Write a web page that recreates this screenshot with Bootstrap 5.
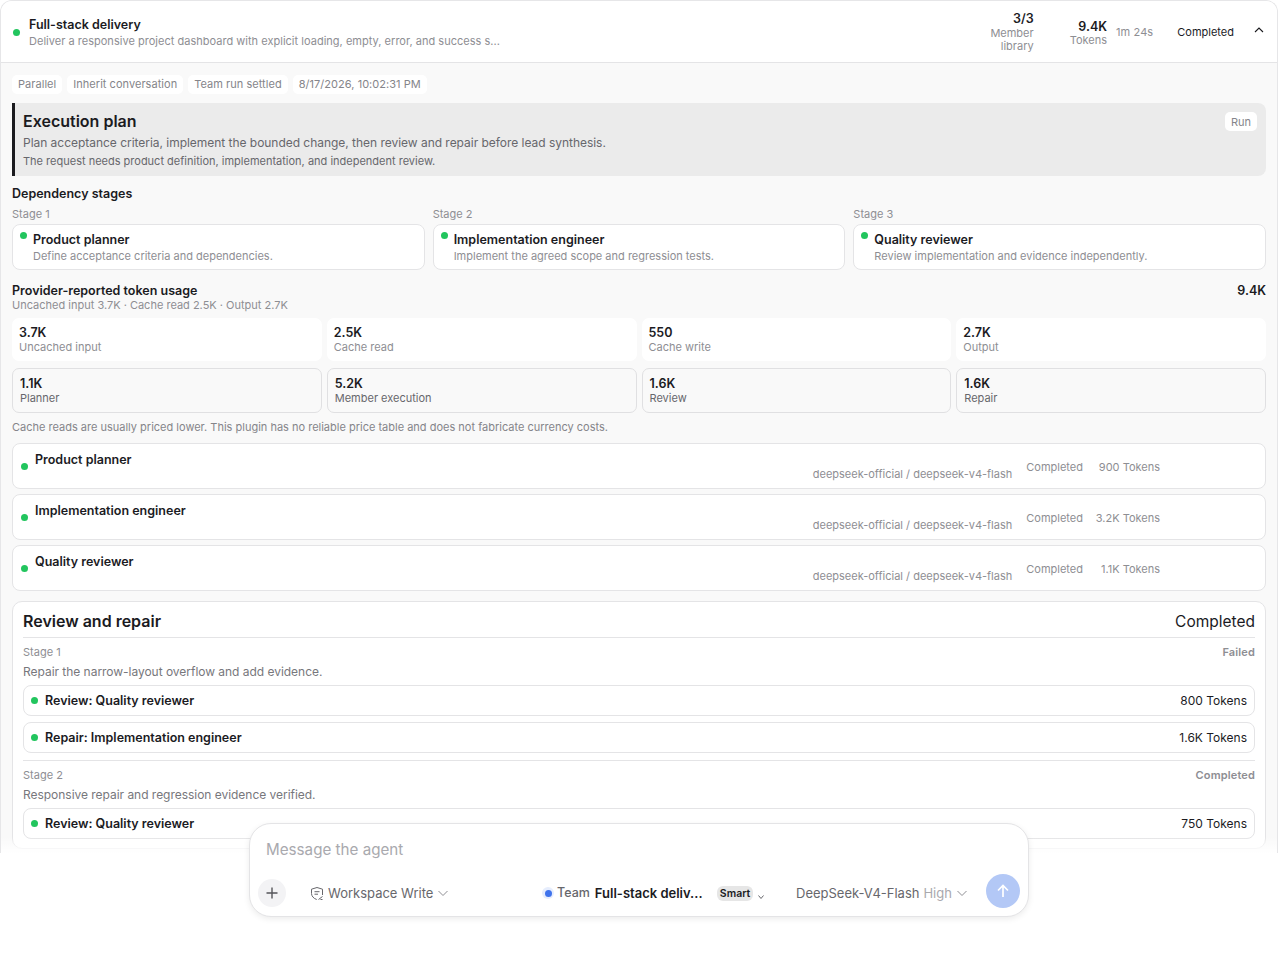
<!DOCTYPE html>
<html lang="en">
<head>
<meta charset="UTF-8">
<meta name="viewport" content="width=device-width, initial-scale=1.0">
<title>Full-stack delivery</title>
<link href="https://cdn.jsdelivr.net/npm/bootstrap@5.3.2/dist/css/bootstrap.min.css" rel="stylesheet">
<style>
body { background: #fff; font-family: Inter, "Liberation Sans", sans-serif; color: #1b1b1f; font-size: 11px; line-height: 14px; height: 960px; overflow: hidden; }
.panel { height: 853px; overflow: hidden; border: 1px solid #e6e6e8; border-bottom: 0; border-radius: 12px 12px 0 0; background: #f9f9f9; position: relative; }
.fade-bottom { position: absolute; left: 0; right: 0; bottom: 0; height: 16px; background: linear-gradient(rgba(255,255,255,0), #fff); pointer-events: none; }
.top { height: 62px; background: #fff; border-bottom: 1px solid #e4e4e6; padding: 2px 12px 0; }
.dot { width: 7px; height: 7px; border-radius: 50%; background: #22c55e; flex: none; }
.title { font-size: 12.5px; font-weight: 600; line-height: 15px; }
.muted { color: #8e8e93; }
.top .desc { font-size: 11px; line-height: 16px; margin-top: 1px; letter-spacing: .02px; }
.top .dot { margin-right: 9px; }
.stat { text-align: right; line-height: 13px; font-size: 11px; }
.stat b { display: block; color: #1b1b1f; font-weight: 600; font-size: 12.5px; line-height: 15px; }
.stat.members { width: 44px; margin-bottom: 2px; }
.stat.members b { line-height: 16px; }
.stat.tokens { margin-left: 36px; }
.elapsed { font-size: 11px; margin: 0 0 2px 9px; letter-spacing: .1px; }
.state { font-size: 11px; margin: 0 0 2px 24px; }
.chevron { margin-left: 19px; margin-bottom: 6px; }
.chip { background: #fff; border-radius: 5px; padding: 0 6px; height: 19px; line-height: 19px; font-size: 11px; color: #85858a; letter-spacing: .04px; }
.chips { gap: 5px; }
.body { padding: 12px 11px 0; }
.plan { background: #ebebeb; border-left: 3px solid #1b1b1f; border-radius: 0 8px 8px 0; height: 73px; margin-top: 9px; padding: 8px 12px 0 8px; position: relative; }
.plan h2 { font-size: 16px; line-height: 20px; font-weight: 600; margin: 0 0 4px; }
.plan p { margin: 0; font-size: 12px; line-height: 15px; color: #67676c; letter-spacing: -.03px; }
.plan small { display: block; font-size: 11px; line-height: 14px; color: #67676c; margin-top: 4px; }
.run { position: absolute; top: 9px; right: 9px; background: #fff; border-radius: 5px; padding: 1px 6px 0; height: 19px; line-height: 19px; font-size: 11px; color: #85858a; }
.head { font-size: 12.5px; font-weight: 600; line-height: 15px; }
.dep-head { margin-top: 10px; }
.stage-label { font-size: 11px; line-height: 14px; color: #8e8e93; margin-bottom: 3px; }
.stage-grid { display: grid; grid-template-columns: repeat(3, 1fr); gap: 8px; margin-top: 6px; }
.box { background: #fff; border: 1px solid #e4e4e6; border-radius: 8px; }
.stage-card { height: 46px; padding: 7px 7px 0; display: flex; gap: 6px; }
.stage-card .title { line-height: 15px; }
.stage-card .desc { font-size: 11px; line-height: 14px; color: #8e8e93; margin-top: 2px; }
.usage-head { margin-top: 13px; }
.usage-sub { margin: 0 0 6px; }
.token-grid { display: grid; grid-template-columns: repeat(4, 1fr); gap: 5px; }
.metric { height: 43px; background: #fff; border-radius: 7px; padding: 7px 7px 0; margin-bottom: 7px; }
.metric.line { height: 45px; background: transparent; border: 1px solid #e0e0e2; margin-bottom: 0; }
.metric b { display: block; font-size: 12.5px; line-height: 15px; font-weight: 600; }
.metric span { display: block; font-size: 11px; line-height: 15px; color: #8e8e93; }
.metric.line span { color: #67676c; }
.note { font-size: 11px; line-height: 14px; color: #85858a; margin: 7px 0 9px; }
.member { height: 46px; margin-bottom: 5px; padding: 0 8px; display: flex; position: relative; }
.member .dot { margin-top: 19px; }
.member .title { margin: 8px 0 0 7px; flex: 1; }
.member .model { font-size: 11px; color: #8e8e93; margin-top: 23px; }
.member .status { font-size: 11px; color: #8e8e93; margin: 16px 0 0 14px; }
.member .tok { font-size: 11px; color: #8e8e93; margin-top: 16px; width: 77px; text-align: right; margin-right: 97px; }
.repair { margin-top: 10px; padding: 1px 10px 0; border-radius: 10px; height: 248px; }
.repair-top { height: 35px; border-bottom: 1px solid #e4e4e6; padding-top: 2px; }
.repair-top h2 { font-size: 16px; font-weight: 600; margin: 0; line-height: 20px; }
.repair-top span { font-size: 15.5px; line-height: 20px; margin-top: 1px; }
.st-row { font-size: 11px; line-height: 14px; color: #8e8e93; margin-top: 7px; }
.st-row b { font-weight: 600; letter-spacing: .15px; }
.st-text { font-size: 12px; line-height: 15px; color: #77777c; margin-top: 5px; letter-spacing: -.03px; }
.rev { height: 31px; border-radius: 8px; padding: 0 7px; margin-top: 6px; font-size: 12px; }
.rev .dot { margin-right: 7px; }
.rev b { font-weight: 600; font-size: 12.5px; }
.sep { border-top: 1px solid #e4e4e6; margin-top: 7px; padding-top: 7px; }
.composer { position: absolute; left: 249px; top: 823px; width: 780px; height: 94px; background: #fff; border: 1px solid #e4e4e6; border-radius: 22px; box-shadow: 0 2px 6px rgba(0,0,0,.08); padding: 0 8px; }
.prompt { font-size: 15.2px; line-height: 20px; color: #a9a9ae; padding: 16px 0 0 8px; height: 44px; }
.plus { width: 28px; height: 28px; border-radius: 50%; background: #f3f3f5; margin-top: 11px; }
.send { width: 34px; height: 34px; border-radius: 50%; background: #b3c8f6; margin-top: 6px; }
.tool { font-size: 13px; line-height: 16px; color: #67676c; margin-top: 11px; height: 28px; }
.mode { margin-left: 24px; width: 233px; }
.team { width: 253px; }
.tdot { width: 12px; height: 12px; border-radius: 50%; background: #e6edfd; margin: 0 3px 0 -1px; }
.tdot i { display: block; width: 7px; height: 7px; border-radius: 50%; background: #3f73ec; }
.team-label { font-size: 12.5px; font-weight: 500; }
.team-name { color: #1b1b1f; font-weight: 600; width: 122px; margin-left: 5px; }
.smart { background: #e6e6e6; border-radius: 6px; font-size: 10.5px; font-weight: 600; padding: 0 3px; line-height: 15px; color: #1b1b1f; }
.light { color: #a9a9ae; }
</style>
</head>
<body>
<div class="panel">
    <div class="top d-flex align-items-center">
        <span class="dot"></span>
        <div class="flex-grow-1">
            <div class="title">Full-stack delivery</div>
            <div class="desc muted">Deliver a responsive project dashboard with explicit loading, empty, error, and success s...</div>
        </div>
        <div class="stat muted members"><b>3/3</b>Member library</div>
        <div class="stat muted tokens"><b>9.4K</b>Tokens</div>
        <div class="muted elapsed">1m 24s</div>
        <div class="state">Completed</div>
        <svg class="chevron" width="12" height="12" viewBox="0 0 12 12" fill="none" stroke="#1b1b1f" stroke-width="1.1"><path d="M2 8l4-4 4 4"/></svg>
    </div>
    <div class="body">
        <div class="d-flex chips">
            <span class="chip">Parallel</span>
            <span class="chip">Inherit conversation</span>
            <span class="chip">Team run settled</span>
            <span class="chip">8/17/2026, 10:02:31 PM</span>
        </div>
        <div class="plan">
            <h2>Execution plan</h2>
            <p>Plan acceptance criteria, implement the bounded change, then review and repair before lead synthesis.</p>
            <small>The request needs product definition, implementation, and independent review.</small>
            <span class="run">Run</span>
        </div>
        <div class="head dep-head">Dependency stages</div>
        <div class="stage-grid">
            <div><div class="stage-label">Stage 1</div><div class="box stage-card"><span class="dot"></span><div><div class="title">Product planner</div><div class="desc">Define acceptance criteria and dependencies.</div></div></div></div>
            <div><div class="stage-label">Stage 2</div><div class="box stage-card"><span class="dot"></span><div><div class="title">Implementation engineer</div><div class="desc">Implement the agreed scope and regression tests.</div></div></div></div>
            <div><div class="stage-label">Stage 3</div><div class="box stage-card"><span class="dot"></span><div><div class="title">Quality reviewer</div><div class="desc">Review implementation and evidence independently.</div></div></div></div>
        </div>
        <div class="d-flex justify-content-between usage-head">
            <div class="head">Provider-reported token usage</div>
            <div class="head">9.4K</div>
        </div>
        <div class="stage-label usage-sub">Uncached input 3.7K · Cache read 2.5K · Output 2.7K</div>
        <div class="token-grid">
            <div class="metric"><b>3.7K</b><span>Uncached input</span></div>
            <div class="metric"><b>2.5K</b><span>Cache read</span></div>
            <div class="metric"><b>550</b><span>Cache write</span></div>
            <div class="metric"><b>2.7K</b><span>Output</span></div>
        </div>
        <div class="token-grid">
            <div class="metric line"><b>1.1K</b><span>Planner</span></div>
            <div class="metric line"><b>5.2K</b><span>Member execution</span></div>
            <div class="metric line"><b>1.6K</b><span>Review</span></div>
            <div class="metric line"><b>1.6K</b><span>Repair</span></div>
        </div>
        <div class="note">Cache reads are usually priced lower. This plugin has no reliable price table and does not fabricate currency costs.</div>
        <div class="box member"><span class="dot"></span><div class="title">Product planner</div><div class="model">deepseek-official / deepseek-v4-flash</div><div class="status">Completed</div><div class="tok">900 Tokens</div></div>
        <div class="box member"><span class="dot"></span><div class="title">Implementation engineer</div><div class="model">deepseek-official / deepseek-v4-flash</div><div class="status">Completed</div><div class="tok">3.2K Tokens</div></div>
        <div class="box member"><span class="dot"></span><div class="title">Quality reviewer</div><div class="model">deepseek-official / deepseek-v4-flash</div><div class="status">Completed</div><div class="tok">1.1K Tokens</div></div>
        <div class="box repair">
            <div class="repair-top d-flex justify-content-between align-items-center"><h2>Review and repair</h2><span>Completed</span></div>
            <div class="st-row d-flex justify-content-between"><span>Stage 1</span><b>Failed</b></div>
            <div class="st-text">Repair the narrow-layout overflow and add evidence.</div>
            <div class="box rev d-flex align-items-center"><span class="dot"></span><b class="flex-grow-1">Review: Quality reviewer</b><span>800 Tokens</span></div>
            <div class="box rev d-flex align-items-center"><span class="dot"></span><b class="flex-grow-1">Repair: Implementation engineer</b><span>1.6K Tokens</span></div>
            <div class="sep st-row d-flex justify-content-between"><span>Stage 2</span><b>Completed</b></div>
            <div class="st-text">Responsive repair and regression evidence verified.</div>
            <div class="box rev d-flex align-items-center"><span class="dot"></span><b class="flex-grow-1">Review: Quality reviewer</b><span>750 Tokens</span></div>
        </div>
    </div>
    <div class="fade-bottom"></div>
</div>
<div class="composer">
    <div class="prompt">Message the agent</div>
    <div class="d-flex">
        <div class="plus d-flex align-items-center justify-content-center">
            <svg width="14" height="14" viewBox="0 0 14 14" stroke="#55555a" stroke-width="1.4"><path d="M7 1.5v11M1.5 7h11"/></svg>
        </div>
        <div class="tool mode d-flex align-items-center">
            <svg class="me-1" width="14" height="15" viewBox="0 0 14 15" fill="none" stroke="#67676c" stroke-width="1"><path d="M12.5 9V3.2L7 1.5 1.5 3.2v4.3c0 2.7 2.2 5 5.2 6M4.500 5.700h5M4.500 8.200h3.500M8.500 13.500l4-3M10.500 13.500h2"/></svg>
            Workspace Write
            <svg class="ms-1" width="12" height="12" viewBox="0 0 12 12" fill="none" stroke="#8e8e93"><path d="M1.500 4l4.500 4.500L10.500 4"/></svg>
        </div>
        <div class="tool team d-flex align-items-center">
            <span class="tdot d-flex align-items-center justify-content-center"><i></i></span>
            <span class="team-label">Team</span>
            <b class="team-name">Full-stack deliv...</b>
            <span class="smart">Smart</span>
            <svg class="ms-1 mt-2" width="8" height="8" viewBox="0 0 8 8" fill="none" stroke="#67676c"><path d="M1.500 2.500L4 5.500l2.500-3"/></svg>
        </div>
        <div class="tool d-flex align-items-center">
            DeepSeek-V4-Flash<span class="light ms-1">High</span>
            <svg class="ms-1" width="12" height="12" viewBox="0 0 12 12" fill="none" stroke="#8e8e93"><path d="M1.500 4l4.500 4.500L10.500 4"/></svg>
        </div>
        <div class="send d-flex align-items-center justify-content-center ms-auto">
            <svg width="16" height="16" viewBox="0 0 16 16" fill="none" stroke="#fff" stroke-width="1.7"><path d="M8 14V2.500M3 7.500l5-5 5 5"/></svg>
        </div>
    </div>
</div>
<script src="https://cdn.jsdelivr.net/npm/bootstrap@5.3.2/dist/js/bootstrap.bundle.min.js"></script>
</body>
</html>
